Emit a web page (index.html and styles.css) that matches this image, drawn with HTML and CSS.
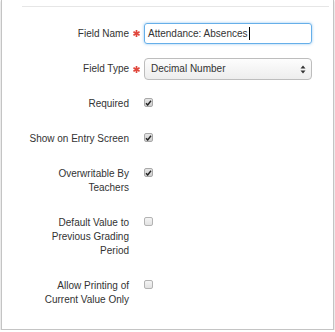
FILE: index.html
```html
<!DOCTYPE html>
<html>
	<head>
		<title>Field Settings</title>
		<link rel="stylesheet" href="styles.css">
	</head>
	<body>
	<div class="panel">
		<div class="rule"></div>
		<div class="form">
			<div class="row row-input">
				<div class="label">Field Name</div>
				<div class="req"><svg width="7" height="7" viewBox="0 0 8 8"><g stroke="#e0473c" stroke-width="1.9" stroke-linecap="butt"><line x1="4" y1="0" x2="4" y2="8"/><line x1="0.5" y1="2" x2="7.5" y2="6"/><line x1="0.5" y1="6" x2="7.5" y2="2"/></g></svg></div>
				<div class="text-input">Attendance: Absences<span class="caret"></span></div>
			</div>
			<div class="row row-select">
				<div class="label">Field Type</div>
				<div class="req"><svg width="7" height="7" viewBox="0 0 8 8"><g stroke="#e0473c" stroke-width="1.9" stroke-linecap="butt"><line x1="4" y1="0" x2="4" y2="8"/><line x1="0.5" y1="2" x2="7.5" y2="6"/><line x1="0.5" y1="6" x2="7.5" y2="2"/></g></svg></div>
				<div class="select">
					<span>Decimal Number</span>
					<svg class="arrows" width="6" height="9" viewBox="0 0 6 9"><path d="M0.5 3.5 L3 0.5 L5.5 3.5 Z M0.5 5.5 L3 8.5 L5.5 5.5 Z" fill="#333"/></svg>
				</div>
			</div>
			<div class="row">
				<div class="label">Required</div>
				<div class="req"></div>
				<div class="check on"><svg width="7" height="6" viewBox="0 0 7 6"><path d="M1 3.2 L2.7 5 L6 0.8" fill="none" stroke="#222" stroke-width="1.4"/></svg></div>
			</div>
			<div class="row">
				<div class="label">Show on Entry Screen</div>
				<div class="req"></div>
				<div class="check on"><svg width="7" height="6" viewBox="0 0 7 6"><path d="M1 3.2 L2.7 5 L6 0.8" fill="none" stroke="#222" stroke-width="1.4"/></svg></div>
			</div>
			<div class="row">
				<div class="label">Overwritable By Teachers</div>
				<div class="req"></div>
				<div class="check on"><svg width="7" height="6" viewBox="0 0 7 6"><path d="M1 3.2 L2.7 5 L6 0.8" fill="none" stroke="#222" stroke-width="1.4"/></svg></div>
			</div>
			<div class="row">
				<div class="label">Default Value to Previous Grading Period</div>
				<div class="req"></div>
				<div class="check"></div>
			</div>
			<div class="row last">
				<div class="label">Allow Printing of Current Value Only</div>
				<div class="req"></div>
				<div class="check"></div>
			</div>
		</div>
	</div>
	</body>
</html>
```

FILE: styles.css
```css
body {
	margin: 0;
	background: #fff;
	font-family: "Liberation Sans", Arial, sans-serif;
	font-size: 10px;
	color: #333;
}
.panel {
	margin-left: 1px;
	width: 333px;
	height: 330px;
	border: 1px solid #c4c4c4;
	border-top: none;
	box-shadow: 0 1px 2px rgba(0,0,0,0.25);
	padding-top: 6px;
	box-sizing: border-box;
}
.rule {
	margin-left: 20px;
	margin-right: 4px;
	border-top: 1px solid #e6e6e6;
}
.form {
	padding-left: 23px;
	padding-top: 16px;
}
.row {
	display: flex;
	align-items: flex-start;
	line-height: 14px;
	margin-bottom: 21px;
}
.row.row-input {
	margin-bottom: 14px;
	align-items: center;
}
.row.row-select {
	margin-bottom: 17px;
	align-items: center;
}
.label {
	width: 104px;
	text-align: right;
}
.req {
	width: 15px;
	display: flex;
	justify-content: center;
	align-items: center;
}
.text-input {
	width: 168px;
	height: 21px;
	box-sizing: border-box;
	border: 1px solid #66afe9;
	border-radius: 3px;
	box-shadow: 0 0 3px rgba(102,175,233,0.7);
	padding-left: 3px;
	line-height: 19px;
	display: flex;
	align-items: center;
}
.caret {
	display: inline-block;
	width: 1px;
	height: 13px;
	background: #000;
	margin-left: 1px;
}
.select {
	width: 168px;
	height: 22px;
	box-sizing: border-box;
	border: 1px solid #bdbdbd;
	border-radius: 4px;
	background: linear-gradient(#fdfdfd, #ededed);
	padding-left: 6px;
	padding-right: 5px;
	display: flex;
	align-items: center;
	justify-content: space-between;
}
.check {
	width: 9px;
	height: 9px;
	margin-top: 1px;
	box-sizing: border-box;
	border: 1px solid #b3b3b3;
	border-radius: 2px;
	background: linear-gradient(#f4f4f4, #e2e2e2);
	display: flex;
	align-items: center;
	justify-content: center;
}
.check.on {
	background: linear-gradient(#e6e6e6, #cfcfcf);
	border-color: #a8a8a8;
}
```
